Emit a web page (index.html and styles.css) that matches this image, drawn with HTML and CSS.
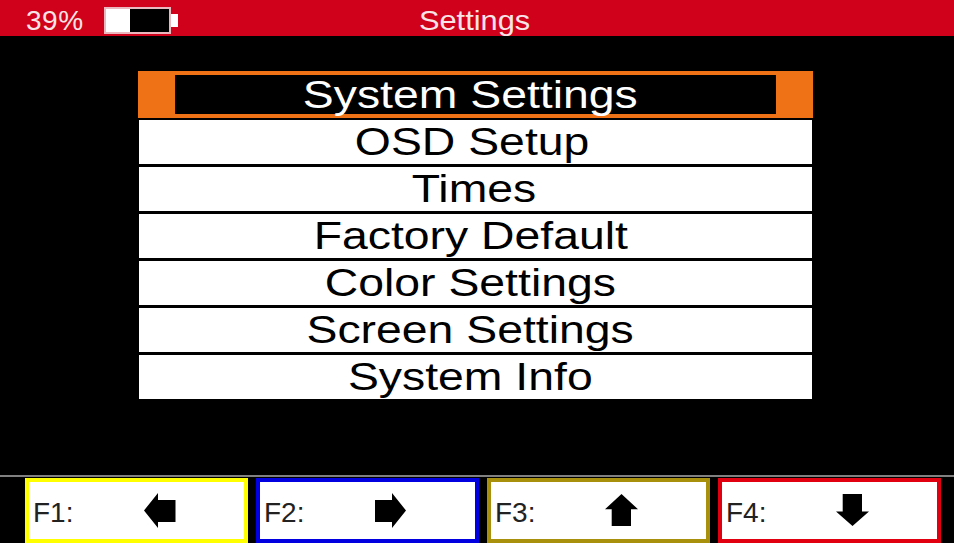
FILE: index.html
```html
<!DOCTYPE html>
<html lang="en">
<head>
    <meta charset="UTF-8">
    <title>Settings</title>
    <link rel="stylesheet" href="styles.css">
</head>
<body>
    <div class="screen">
        <div class="top-bar">
            <div class="status">
                <span class="percent">39%</span>
                <div class="battery">
                    <div class="battery-body"><div class="battery-level"></div></div>
                    <div class="battery-tip"></div>
                </div>
            </div>
            <div class="page-title">Settings</div>
        </div>

        <div class="menu">
            <div class="menu-item selected">
                <div class="selected-box"><span class="menu-label">System Settings</span></div>
            </div>
            <div class="menu-item"><span class="menu-label label-osd">OSD Setup</span></div>
            <div class="menu-item"><span class="menu-label label-times">Times</span></div>
            <div class="menu-item"><span class="menu-label">Factory Default</span></div>
            <div class="menu-item"><span class="menu-label">Color Settings</span></div>
            <div class="menu-item"><span class="menu-label">Screen Settings</span></div>
            <div class="menu-item"><span class="menu-label">System Info</span></div>
        </div>

        <div class="footer">
            <div class="key key-yellow">
                <span class="key-name">F1:</span>
                <svg class="key-icon" viewBox="0 0 34 36"><path d="M1 17.5 15 0V7H32.5V29H15V35Z"/></svg>
            </div>
            <div class="key key-blue">
                <span class="key-name">F2:</span>
                <svg class="key-icon" viewBox="0 0 34 36"><path d="M32 17.5 18 0V7H1V29H18V35Z"/></svg>
            </div>
            <div class="key key-olive">
                <span class="key-name">F3:</span>
                <svg class="key-icon" viewBox="0 0 34 36"><path d="M16.5 1 33 16.3H26V33H6.7V16.3H0Z"/></svg>
            </div>
            <div class="key key-red">
                <span class="key-name">F4:</span>
                <svg class="key-icon" viewBox="0 0 34 36"><path d="M16.5 33 33 18.5H26V1H6.7V18.5H0Z"/></svg>
            </div>
        </div>
    </div>
</body>
</html>
```

FILE: styles.css
```css
* {
    box-sizing: border-box;
}
body {
    margin: 0;
    background-color: #000;
    font-family: "Liberation Sans", Arial, sans-serif;
    overflow: hidden;
}
.screen {
    width: 954px;
    height: 543px;
    display: flex;
    flex-direction: column;
}
.top-bar {
    height: 36px;
    padding-top: 3px;
    background-color: #d0011b;
    color: #f8e4e6;
    display: grid;
    grid-template-columns: 1fr auto 1fr;
    align-items: center;
}
.status {
    display: flex;
    align-items: center;
    gap: 20px;
    padding-left: 26px;
}
.percent {
    font-size: 28px;
    letter-spacing: 0.5px;
    margin-top: 2px;
}
.page-title {
    font-size: 28px;
    margin-top: 2px;
    margin-right: 4px;
    transform: scaleX(1.1);
}
.battery {
    display: flex;
    align-items: center;
}
.battery-body {
    width: 67px;
    height: 27px;
    background-color: #000;
    border: 2px solid #e8b8be;
}
.battery-level {
    width: 24px;
    height: 100%;
    background-color: #fff;
}
.battery-tip {
    width: 7px;
    height: 13px;
    background-color: #fff;
}
.menu {
    width: 675px;
    margin: 35px 0 0 138px;
    display: flex;
    flex-direction: column;
    gap: 3px;
}
.menu-item {
    height: 44px;
    margin: 0 1px;
    background-color: #fff;
    color: #000;
    display: flex;
    align-items: center;
    justify-content: center;
}
.menu-label {
    font-size: 38px;
    display: inline-block;
    transform: scaleX(1.22);
    position: relative;
    left: -5px;
}
.label-osd {
    left: -3px;
}
.label-times {
    left: -1px;
}
.menu-item.selected {
    height: 47px;
    margin: 0 0 -1px;
    padding: 4px 37px;
    background-color: #f07216;
}
.selected-box {
    width: 100%;
    height: 100%;
    padding-top: 2px;
    background-color: #000;
    color: #fff;
    display: flex;
    align-items: center;
    justify-content: center;
}
.footer {
    margin-top: auto;
    height: 68px;
    border-top: 2px solid #808080;
    display: flex;
    gap: 8px;
    padding: 1px 0 0 25px;
}
.key {
    width: 223px;
    background-color: #fff;
    border: 4px solid;
    display: flex;
    align-items: center;
    position: relative;
    color: #222;
}
.key-yellow { border-color: #ffff00; }
.key-blue { border-color: #0000e0; }
.key-olive { border-color: #a8900c; }
.key-red { border-color: #e00010; }
.key-name {
    font-size: 28px;
    margin-left: 4px;
    margin-top: 4px;
}
.key-icon {
    position: absolute;
    left: 114px;
    top: 11px;
    width: 34px;
    height: 36px;
}
```
